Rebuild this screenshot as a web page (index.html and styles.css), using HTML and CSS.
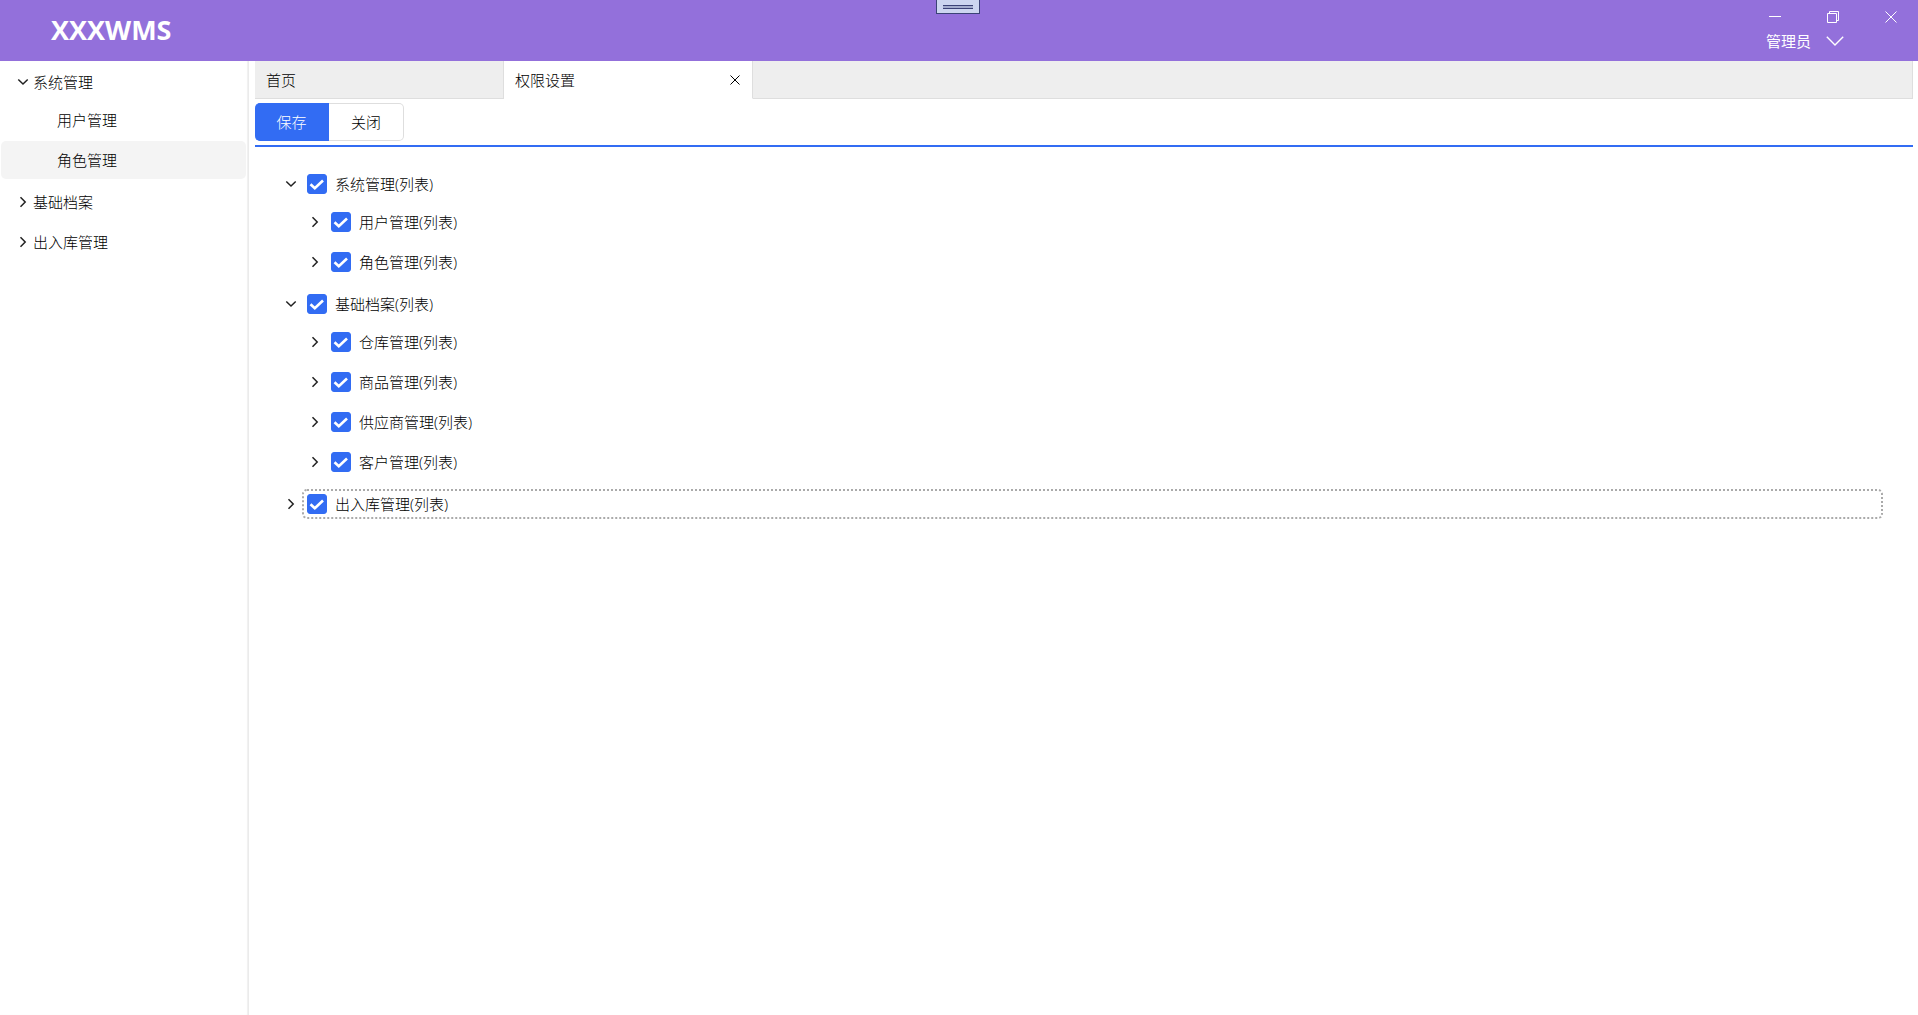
FILE: index.html
```html
<!DOCTYPE html>
<html lang="zh-CN">
<head>
<meta charset="utf-8">
<meta name="viewport" content="width=device-width, initial-scale=1">
<title>XXXWMS</title>
<link rel="stylesheet" href="styles.css">
</head>
<body>
<svg class="sprite" aria-hidden="true">
  <symbol id="down" viewBox="0 0 12 12"><path d="M1.300 3.500 6 8l4.700-4.500"/></symbol>
  <symbol id="right" viewBox="0 0 12 12"><path d="M3.500 1.300 8.200 6 3.500 10.700"/></symbol>
</svg>
<header class="header">
  <h1 class="brand">XXXWMS</h1>
  <button class="grip" type="button" aria-label="工具栏"><span class="grip-lines"></span></button>
  <div class="header-side">
    <div class="window-controls">
      <button type="button" aria-label="最小化"><svg width="12" height="12"><path d="M0 5.500h12"/></svg></button>
      <button type="button" aria-label="还原"><svg width="12" height="12"><path d="M.5 2.500h9v9h-9zM2.500 2.500v-2h9v9h-2"/></svg></button>
      <button type="button" aria-label="关闭窗口"><svg width="12" height="12"><path d="m.5.5 11 11m0-11-11 11"/></svg></button>
    </div>
    <button class="user" type="button">管理员<svg width="18" height="10"><path d="m.8.8 8.200 8.200L17.200.8"/></svg></button>
  </div>
</header>
<div class="body">
  <nav class="sidebar">
    <ul class="menu">
      <li>
        <button class="menu-head" type="button" aria-expanded="true"><svg class="chevron"><use href="#down"/></svg>系统管理</button>
        <ul class="submenu">
          <li><a href="#users">用户管理</a></li>
          <li><a class="current" href="#roles">角色管理</a></li>
        </ul>
      </li>
      <li><button class="menu-head" type="button" aria-expanded="false"><svg class="chevron"><use href="#right"/></svg>基础档案</button></li>
      <li><button class="menu-head" type="button" aria-expanded="false"><svg class="chevron"><use href="#right"/></svg>出入库管理</button></li>
    </ul>
  </nav>
  <main class="main">
    <div class="tabs">
      <div class="tab"><button class="tab-name" type="button">首页</button></div>
      <div class="tab active"><button class="tab-name" type="button">权限设置</button><button class="tab-close" type="button" aria-label="关闭标签"><svg width="10" height="10"><path d="m.5.5 9 9m0-9-9 9"/></svg></button></div>
      <div class="tab-rest"></div>
    </div>
    <div class="toolbar">
      <button class="btn primary" type="button">保存</button><button class="btn" type="button">关闭</button>
    </div>
    <ul class="tree">
      <li>
        <div class="node"><button class="toggle" type="button" aria-label="收起"><svg class="chevron"><use href="#down"/></svg></button><label><input type="checkbox" checked>系统管理(列表)</label></div>
        <ul class="branch">
          <li class="node"><button class="toggle" type="button" aria-label="展开"><svg class="chevron"><use href="#right"/></svg></button><label><input type="checkbox" checked>用户管理(列表)</label></li>
          <li class="node"><button class="toggle" type="button" aria-label="展开"><svg class="chevron"><use href="#right"/></svg></button><label><input type="checkbox" checked>角色管理(列表)</label></li>
        </ul>
      </li>
      <li>
        <div class="node"><button class="toggle" type="button" aria-label="收起"><svg class="chevron"><use href="#down"/></svg></button><label><input type="checkbox" checked>基础档案(列表)</label></div>
        <ul class="branch">
          <li class="node"><button class="toggle" type="button" aria-label="展开"><svg class="chevron"><use href="#right"/></svg></button><label><input type="checkbox" checked>仓库管理(列表)</label></li>
          <li class="node"><button class="toggle" type="button" aria-label="展开"><svg class="chevron"><use href="#right"/></svg></button><label><input type="checkbox" checked>商品管理(列表)</label></li>
          <li class="node"><button class="toggle" type="button" aria-label="展开"><svg class="chevron"><use href="#right"/></svg></button><label><input type="checkbox" checked>供应商管理(列表)</label></li>
          <li class="node"><button class="toggle" type="button" aria-label="展开"><svg class="chevron"><use href="#right"/></svg></button><label><input type="checkbox" checked>客户管理(列表)</label></li>
        </ul>
      </li>
      <li>
        <div class="node"><button class="toggle" type="button" aria-label="展开"><svg class="chevron"><use href="#right"/></svg></button><label class="focused"><input type="checkbox" checked>出入库管理(列表)</label></div>
      </li>
    </ul>
  </main>
</div>
</body>
</html>
```

FILE: styles.css
```css
* { box-sizing: border-box; }

body {
  margin: 0;
  min-height: 100vh;
  display: flex;
  flex-direction: column;
  background: #fff;
  color: #000;
  font: 300 15px/20px "Open Sans", "Noto Sans CJK SC", sans-serif;
}

button {
  margin: 0;
  padding: 0;
  border: 0;
  background: none;
  color: inherit;
  font: inherit;
  text-align: left;
}

ul { margin: 0; padding: 0; list-style: none; }
a { color: inherit; text-decoration: none; }
svg { display: block; flex: none; fill: none; stroke: currentColor; }
.sprite { position: absolute; width: 0; height: 0; }
.chevron { width: 12px; height: 12px; color: #212121; stroke-width: 1.5; }

/* Title bar */
.header {
  position: relative;
  display: flex;
  justify-content: space-between;
  height: 61px;
  padding-left: 51px;
  background: #9370db;
  color: #fff;
}
.brand { margin: 0; font-size: 27px; line-height: 60px; font-weight: 700; }
.grip {
  position: absolute;
  top: 0;
  left: calc(50% - 23px);
  width: 44px;
  height: 14px;
  padding: 5px 6px;
  border: 1px solid #3b4277;
  border-top: 0;
  background: #ccd5f0;
}
.grip-lines {
  display: block;
  height: 4px;
  border: solid #3b4277;
  border-width: 1px 0;
  background: #a3acce;
}
.header-side { width: 170px; }
.window-controls { display: flex; gap: 4px; height: 31px; padding-top: 3px; }
.window-controls button { display: grid; place-items: center; width: 54px; }
.user { display: flex; align-items: center; gap: 15px; padding-left: 18px; font-weight: 400; }
.user svg { stroke-width: 1.4; }

/* Side menu */
.body { flex: 1; display: flex; gap: 6px; }
.sidebar {
  flex: none;
  width: 249px;
  padding: 3px 2px 0 1px;
  border-right: 1px solid #ebebeb;
  box-shadow: inset -1px 0 1px #f0f0f0;
}
.menu { display: grid; gap: 4px; }
.menu-head { display: flex; align-items: center; gap: 4px; width: 100%; height: 36px; padding-left: 16px; }
.submenu li { height: 40px; padding: 1px 0; }
.submenu a {
  display: block;
  padding: 9px 56px;
  border-radius: 5px;
}
.submenu .current { background: #f4f4f4; }

/* Tabs */
.main { flex: 1; min-width: 0; padding-right: 5px; }
.tabs { display: flex; height: 38px; }
.tab, .tab-rest { background: #eee; border: solid #dedede; border-width: 0 1px 1px 0; }
.tab { display: flex; align-items: center; width: 249px; padding: 0 12px 0 11px; }
.tab-name { flex: 1; }
.tab.active { background: #fff; border-bottom-color: #fff; }
.tab-rest { flex: 1; }

/* Toolbar */
.toolbar { display: flex; padding: 4px 0; border-bottom: 2px solid #326cf3; }
.btn {
  width: 75px;
  height: 38px;
  border: 1px solid #dedede;
  border-left: 0;
  border-radius: 0 5px 5px 0;
  text-align: center;
}
.btn.primary {
  width: 74px;
  border-color: #326cf3;
  border-radius: 5px 0 0 5px;
  background: #326cf3;
  color: #fff;
}

/* Permission tree */
.tree { display: grid; gap: 4px; padding: 19px 30px 0 24px; }
.node { display: flex; align-items: center; height: 36px; }
.branch { padding-left: 24px; }
.branch .node { height: 40px; }
.toggle { display: grid; place-items: center; width: 23px; height: 30px; }
.node label {
  flex: 1;
  display: flex;
  align-items: center;
  gap: 8px;
  height: 30px;
  padding-left: 3px;
  border: 2px solid transparent;
  border-radius: 5px;
}
.node .focused { border: 2px dotted #aaa; }
.node input {
  appearance: none;
  width: 20px;
  height: 20px;
  margin: 0;
  border: 1px solid #326cf3;
  border-radius: 3px;
}
.node input:checked {
  background: #326cf3 url("data:image/svg+xml,%3Csvg xmlns='http://www.w3.org/2000/svg' viewBox='0 0 18 18'%3E%3Cpath d='M2.500 9.200 6.800 13.300 15 5.500' fill='none' stroke='white' stroke-width='2.600'/%3E%3C/svg%3E") center / 18px no-repeat;
}
```
